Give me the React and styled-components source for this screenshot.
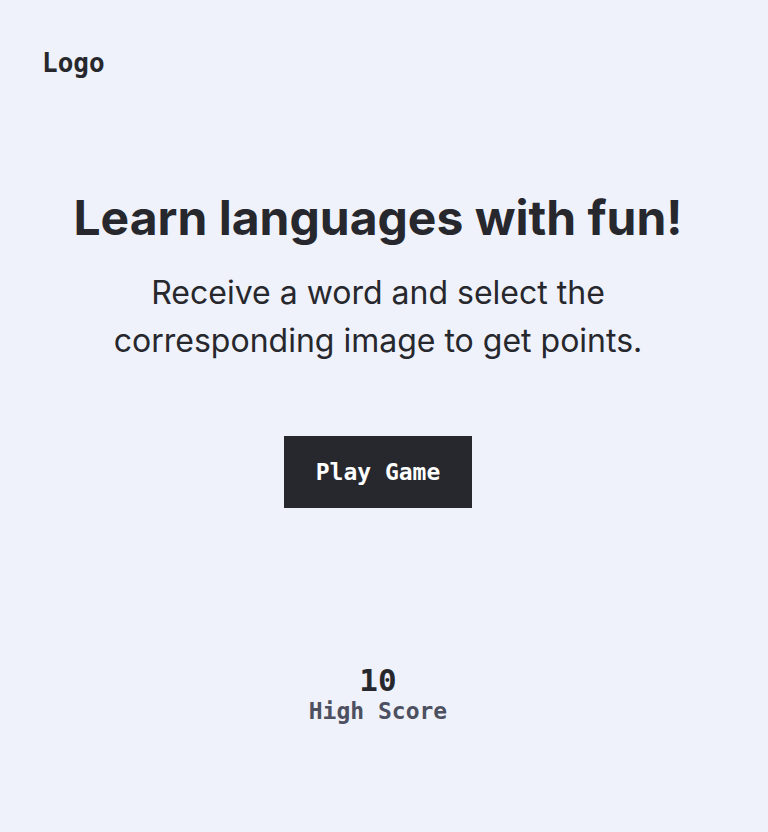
import React from 'react';
import styled, { createGlobalStyle } from 'styled-components';

const GlobalStyle = createGlobalStyle`
    html, body {
        margin: 0;
        padding: 0;
        background: #eff2fa;
    }
    body {
        font-family: Inter, "Noto Sans", sans-serif;
        color: #27282d;
    }
`;

const Page = styled.div`
    display: flex;
    flex-flow: column nowrap;
    min-height: 832px;
    padding-right: 12px;
    box-sizing: border-box;
`;

const Header = styled.header`
    display: flex;
    align-items: center;
    padding: 47px 42px 0;
    height: 32px;
`;

const Logo = styled.div`
    font-family: "DejaVu Sans Mono", "Liberation Mono", monospace;
    font-weight: 700;
    font-size: 26px;
`;

const Main = styled.main`
    display: flex;
    flex-flow: column nowrap;
    align-items: center;
    text-align: center;
    padding-top: 103px;
`;

const Title = styled.h1`
    margin: 0;
    font-size: 48px;
    font-weight: 700;
    line-height: 72px;
`;

const Subtitle = styled.p`
    margin: 15px 0 0;
    max-width: 580px;
    font-size: 32px;
    font-weight: 400;
    line-height: 48px;
`;

const PlayButton = styled.button`
    margin-top: 71px;
    width: 188px;
    height: 72px;
    border: none;
    background: #27282d;
    color: #ffffff;
    font-family: "DejaVu Sans Mono", "Liberation Mono", monospace;
    font-weight: 700;
    font-size: 23px;
    cursor: pointer;
`;

const Score = styled.div`
    display: flex;
    flex-flow: column nowrap;
    align-items: center;
    margin-top: 156px;
    font-family: "DejaVu Sans Mono", "Liberation Mono", monospace;
    font-weight: 700;
`;

const ScoreValue = styled.span`
    font-size: 31px;
    line-height: 32px;
    color: #27282d;
`;

const ScoreLabel = styled.span`
    font-size: 23px;
    line-height: 30px;
    color: #4d5060;
`;

export default function App() {
    return (
        <>
            <GlobalStyle />
            <Page>
                <Header>
                    <Logo>Logo</Logo>
                </Header>
                <Main>
                    <Title>Learn languages with fun!</Title>
                    <Subtitle>Receive a word and select the corresponding image to get points.</Subtitle>
                    <PlayButton>Play Game</PlayButton>
                    <Score>
                        <ScoreValue>10</ScoreValue>
                        <ScoreLabel>High Score</ScoreLabel>
                    </Score>
                </Main>
            </Page>
        </>
    );
}
